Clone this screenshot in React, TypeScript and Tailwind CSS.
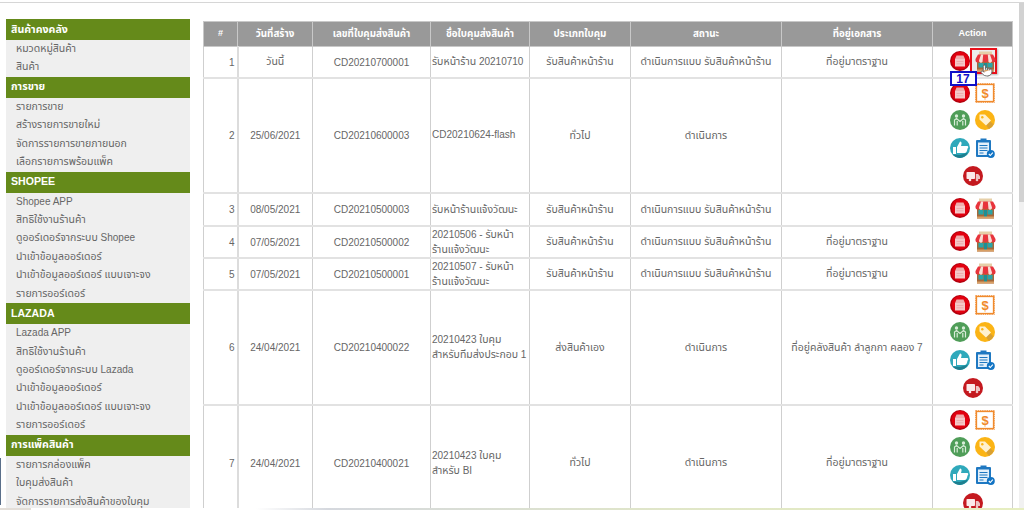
import React from "react";
import { Pointer } from "lucide-react";

const FONT = "[font-family:'Liberation_Sans','Noto_Sans','Noto_Sans_Thai','DejaVu_Sans',sans-serif]";

const menu: { title: string; items: string[] }[] = [
  { title: "สินค้าคงคลัง", items: ["หมวดหมู่สินค้า", "สินค้า"] },
  { title: "การขาย", items: ["รายการขาย", "สร้างรายการขายใหม่", "จัดการรายการขายภายนอก", "เลือกรายการพร้อมแพ็ค"] },
  { title: "SHOPEE", items: ["Shopee APP", "สิทธิใช้งานร้านค้า", "ดูออร์เดอร์จากระบบ Shopee", "นำเข้าข้อมูลออร์เดอร์", "นำเข้าข้อมูลออร์เดอร์ แบบเจาะจง", "รายการออร์เดอร์"] },
  { title: "LAZADA", items: ["Lazada APP", "สิทธิใช้งานร้านค้า", "ดูออร์เดอร์จากระบบ Lazada", "นำเข้าข้อมูลออร์เดอร์", "นำเข้าข้อมูลออร์เดอร์ แบบเจาะจง", "รายการออร์เดอร์"] },
  { title: "การแพ็คสินค้า", items: ["รายการกล่องแพ็ค", "ใบคุมส่งสินค้า", "จัดการรายการส่งสินค้าของใบคุม"] },
];

// Thai runs are set slightly larger than Latin ones, as the reference's Thai face is wider.
function T({ s }: { s: string }) {
  return (
    <>
      {s.split(/([\u0E00-\u0E7F]+(?: [\u0E00-\u0E7F]+)*)/).map((part, i) =>
        /[\u0E00-\u0E7F]/.test(part) ? (
          <span key={i} className="text-[10.500px]">{part}</span>
        ) : (
          part
        ),
      )}
    </>
  );
}

function Box() {
  return (
    <svg width="20" height="20" viewBox="0 0 20 20">
      <circle cx="10" cy="10" r="10" fill="#b4000e" />
      <circle cx="10.500" cy="9.500" r="8.800" fill="#e2000f" />
      <path d="M6.500 4.500h7l1.500 3.500H5z" fill="#efaeae" />
      <rect x="5" y="8" width="10" height="7.500" fill="#f4c8c8" />
      <path d="M6.500 10.500h7M6.500 12.800h7" stroke="#eaa6a6" strokeWidth="0.800" />
    </svg>
  );
}

function Shop() {
  return (
    <svg width="21" height="21" viewBox="0 0 21 21">
      <rect x="4" y="0.500" width="13" height="3.500" fill="#e6cfa8" />
      <rect x="2" y="8" width="17" height="12.500" fill="#a5683a" />
      <path d="M3 3.500h15l2.500 4.500v1.500a2 2 0 0 1-4 0 2 2 0 0 1-4 0 2 2 0 0 1-4 0 2 2 0 0 1-4 0 2 2 0 0 1-4 0V8z" fill="#e8343c" />
      <path d="M6 3.500h2.200L7.500 11a2 2 0 0 1-3.500-1.500zM12.800 3.500H15l2 6a2 2 0 0 1-3.500 1.500z" fill="#f9ddd6" />
      <rect x="3.500" y="12" width="5" height="4.500" fill="#2aa5a8" />
      <rect x="12.500" y="12" width="5" height="4.500" fill="#2aa5a8" />
      <rect x="9" y="12" width="3" height="8" fill="#1d8f95" />
      <rect x="2" y="18.500" width="17" height="2" fill="#d9a066" />
    </svg>
  );
}

function Dollar() {
  return (
    <svg width="20" height="20" viewBox="0 0 20 20">
      <rect x="0.500" y="0.500" width="19" height="19" fill="none" stroke="#f4a765" strokeWidth="1" strokeDasharray="1.500 0.700" />
      <rect x="1.500" y="1.500" width="17" height="17" fill="#fff" stroke="#f08a2c" strokeWidth="1.300" />
      <text x="10" y="15" textAnchor="middle" fontSize="13" fontWeight="700" fill="#f08a2c" fontFamily="Liberation Sans">$</text>
    </svg>
  );
}

function People() {
  return (
    <svg width="20" height="20" viewBox="0 0 20 20">
      <circle cx="10" cy="10" r="10" fill="#4f9d58" />
      <circle cx="6.500" cy="6" r="1.700" fill="#d8ecd8" />
      <circle cx="13.500" cy="6" r="1.700" fill="#d8ecd8" />
      <path d="M4.500 15.500V10L6.500 8.500l3.500 3 3.500-3 2 1.500v5.500M7.200 11v4.500M12.800 11v4.500" fill="none" stroke="#d8ecd8" strokeWidth="1.200" />
    </svg>
  );
}

function Tag() {
  return (
    <svg width="20" height="20" viewBox="0 0 20 20">
      <circle cx="10" cy="10" r="10" fill="#fbb415" />
      <path d="M10 14l5-3 3.500 3.500A10 10 0 0 1 14 19z" fill="#d9a032" />
      <path d="M4.500 4.500h5.500l6 6-5 5-6.500-6z" fill="#fff1cf" />
      <circle cx="7.300" cy="7.300" r="1.200" fill="#fbb415" />
    </svg>
  );
}

function Thumb() {
  return (
    <svg width="20" height="20" viewBox="0 0 20 20">
      <circle cx="10" cy="10" r="10" fill="#2fa9bb" />
      <path d="M10 17l8-2.500A10 10 0 0 1 10 20 10 10 0 0 1 2.500 16.500z" fill="#1d7f8f" />
      <rect x="3" y="9" width="3" height="7" fill="#fff" />
      <path d="M7 9l3-5.500c1.300 0 1.800 1 1.500 2.500l-.5 2h6.500c1 0 1 2.500 0 2.500-.3 2-1 4.500-2.500 4.500H7z" fill="#fff" />
    </svg>
  );
}

function Clipboard() {
  return (
    <svg width="20" height="20" viewBox="0 0 20 20">
      <rect x="1" y="2" width="15" height="17" rx="1" fill="#1f78c1" />
      <rect x="3" y="4.500" width="11" height="12.500" fill="#e4f0fa" />
      <rect x="5.500" y="0.500" width="6" height="3" fill="#1f78c1" />
      <path d="M4.500 7.500h8M4.500 10h8M4.500 12.500h8M4.500 15h4" stroke="#1f78c1" strokeWidth="1" />
      <circle cx="15.800" cy="16" r="4" fill="#1274c4" />
      <path d="M13.800 16l1.500 1.500 2.500-2.800" fill="none" stroke="#fff" strokeWidth="1.100" />
    </svg>
  );
}

function Truck() {
  return (
    <svg width="20" height="20" viewBox="0 0 20 20">
      <circle cx="10" cy="10" r="10" fill="#c4191f" />
      <rect x="3.500" y="6" width="8.500" height="7" rx="0.800" fill="#fbeaea" />
      <path d="M12.800 8h2.400l1.800 2.200V13h-4.200z" fill="#eec3c3" />
      <circle cx="7" cy="14" r="1.300" fill="#fbeaea" />
      <circle cx="14" cy="14" r="1.300" fill="#eec3c3" />
    </svg>
  );
}

function FullIcons() {
  return (
    <div className="mx-auto flex w-[46px] flex-wrap justify-center gap-x-[5.500px] gap-y-[7.700px]">
      <Box />
      <Dollar />
      <People />
      <Tag />
      <Thumb />
      <Clipboard />
      <Truck />
    </div>
  );
}

function ShopIcons({ active }: { active?: boolean }) {
  return (
    <div className="relative mx-auto flex w-[46px] justify-center gap-x-[5px]">
      {active && (
        <div className="absolute left-[20px] top-[-3px] h-[26px] w-[27px] border-2 border-[#e8101a] bg-[#ececec] shadow-[1px_1px_2px_rgba(0,0,0,0.3)]" />
      )}
      <span className="relative"><Box /></span>
      <span className="relative"><Shop /></span>
      {active && (
        <>
          <Pointer className="absolute left-[30px] top-[13px]" size={13} fill="#fff" stroke="#555" strokeWidth={1.500} />
          <div className="absolute left-[0px] top-[20px] flex h-[15px] w-[27px] items-center justify-center border-2 border-[#1010c8] bg-white text-[12px] font-bold leading-none text-[#1010c8]">
            17
          </div>
        </>
      )}
    </div>
  );
}

type Row = {
  no: number;
  date: string;
  code: string;
  name: React.ReactNode;
  type: string;
  status: string;
  place: string;
  h: string;
  full?: boolean;
  active?: boolean;
};

const FRONT = "ดำเนินการแบบ รับสินค้าหน้าร้าน";
const rows: Row[] = [
  { no: 1, date: "วันนี้", code: "CD20210700001", name: <T s="รับหน้าร้าน 20210710" />, type: "รับสินค้าหน้าร้าน", status: FRONT, place: "ที่อยู่มาตราฐาน", h: "h-[31px]", active: true },
  { no: 2, date: "25/06/2021", code: "CD20210600003", name: "CD20210624-flash", type: "ทั่วไป", status: "ดำเนินการ", place: "", h: "h-[115px]", full: true },
  { no: 3, date: "08/05/2021", code: "CD20210500003", name: <T s="รับหน้าร้านแจ้งวัฒนะ" />, type: "รับสินค้าหน้าร้าน", status: FRONT, place: "", h: "h-[33px]" },
  { no: 4, date: "07/05/2021", code: "CD20210500002", name: <><T s="20210506 - รับหน้า" /><br /><T s="ร้านแจ้งวัฒนะ" /></>, type: "รับสินค้าหน้าร้าน", status: FRONT, place: "ที่อยู่มาตราฐาน", h: "h-[32px]" },
  { no: 5, date: "07/05/2021", code: "CD20210500001", name: <><T s="20210507 - รับหน้า" /><br /><T s="ร้านแจ้งวัฒนะ" /></>, type: "รับสินค้าหน้าร้าน", status: FRONT, place: "ที่อยู่มาตราฐาน", h: "h-[32px]" },
  { no: 6, date: "24/04/2021", code: "CD20210400022", name: <><T s="20210423 ใบคุม" /><br /><T s="สำหรับทีมส่งประกอบ 1" /></>, type: "ส่งสินค้าเอง", status: "ดำเนินการ", place: "ที่อยู่คลังสินค้า ลำลูกกา คลอง 7", h: "h-[115px]", full: true },
  { no: 7, date: "24/04/2021", code: "CD20210400021", name: <><T s="20210423 ใบคุม" /><br /><T s="สำหรับ BI" /></>, type: "ทั่วไป", status: "ดำเนินการ", place: "ที่อยู่มาตราฐาน", h: "h-[116px]", full: true },
];

const heads = ["#", "วันที่สร้าง", "เลขที่ใบคุมส่งสินค้า", "ชื่อใบคุมส่งสินค้า", "ประเภทใบคุม", "สถานะ", "ที่อยู่เอกสาร", "Action"];

export default function App() {
  const cell = "border border-[#cfcfcf] border-b-2 border-b-[#e2e2e2] px-[2px] pt-[1px] pb-0 align-middle";
  return (
    <div className={`${FONT} relative flex h-[510px] w-[1024px] flex-col overflow-hidden bg-white text-[10px] text-[#666]`}>
      <div className="mt-[2px] h-[1px] shrink-0 bg-[#d6d6d6]" />
      <div className="flex min-h-0 flex-1">
        <aside className="ml-[6px] mt-[16px] w-[184px] shrink-0 self-start bg-[#efefef]">
          {menu.map((g) => (
            <div key={g.title}>
              <div className="flex h-[21px] items-center bg-[#658a1a] pl-[5px] text-[10.600px] font-bold text-white">{g.title}</div>
              {g.items.map((it, i) => (
                <div key={i} className="flex h-[18.450px] items-center pb-[1px] pl-[10px] whitespace-pre text-[#666]">
                  <span><T s={it} /></span>
                </div>
              ))}
            </div>
          ))}
        </aside>
        <main className="ml-[13px] mt-[18px] w-[809px] shrink-0">
          <table className="w-[809px] table-fixed border-collapse">
            <colgroup>
              <col className="w-[34px]" />
              <col className="w-[75px]" />
              <col className="w-[118px]" />
              <col className="w-[99px]" />
              <col className="w-[101px]" />
              <col className="w-[151px]" />
              <col className="w-[151px]" />
              <col className="w-[80px]" />
            </colgroup>
            <thead>
              <tr className="h-[25px] bg-[#999]">
                {heads.map((h) => (
                  <th key={h} className="border border-[#c8c8c8] px-[2px] py-0 text-center text-[9px] font-bold text-white">
                    {h === "Action" || h === "#" ? h : <span className="text-[9.800px]">{h}</span>}
                  </th>
                ))}
              </tr>
            </thead>
            <tbody>
              {rows.map((r) => (
                <tr key={r.no} className={r.h}>
                  <td className={`${cell} border-r-2 border-r-[#dcdcdc] !pr-[2px] text-right`}>{r.no}</td>
                  <td className={`${cell} text-center`}><T s={r.date} /></td>
                  <td className={`${cell} text-center`}>{r.code}</td>
                  <td className={`${cell} !pl-[1px] !pt-0 text-left leading-[14px]`}>{r.name}</td>
                  <td className={`${cell} text-center`}><T s={r.type} /></td>
                  <td className={`${cell} text-center`}><T s={r.status} /></td>
                  <td className={`${cell} text-center`}><T s={r.place} /></td>
                  <td className={`${cell} !pt-[4px] !align-top`}>
                    {r.full ? <FullIcons /> : <ShopIcons active={r.active} />}
                  </td>
                </tr>
              ))}
            </tbody>
          </table>
        </main>
        <div className="ml-[7px] flex w-[5px] shrink-0 flex-col bg-[#f1f1f1]">
          <div className="h-[199px] bg-[#d2d2d2]" />
        </div>
      </div>
      <div className="h-[2px] shrink-0 bg-[linear-gradient(90deg,#e3ded8_0%,#e3ded8_3%,#ffffff_3%,#ffffff_25%,#d5d8de_32%,#e0e6c8_65%,#e6eec0_100%)]" />
      <div className="absolute left-0 top-[458px] h-[47px] w-[1px] bg-[#5a6f8a]" />
    </div>
  );
}
